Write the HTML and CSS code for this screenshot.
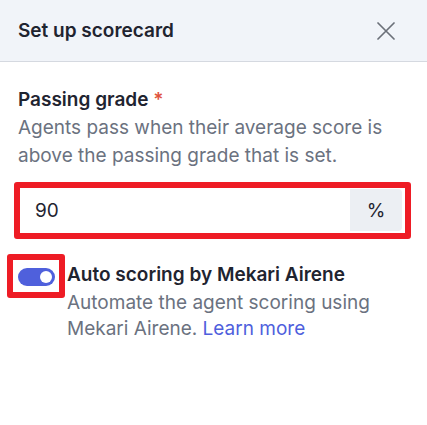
FILE: index.html
```html
<!DOCTYPE html>
<html>
<head>
<meta charset="utf-8">
<link rel="stylesheet" href="styles.css">
</head>
<body>
<div class="panel">
  <header class="header">
    <h1 class="title">Set up scorecard</h1>
    <button class="close" aria-label="Close">
      <svg width="18" height="18" viewBox="0 0 18 18"><path d="M1 1 L17 17 M17 1 L1 17" stroke="#6b7079" stroke-width="1.7" fill="none" stroke-linecap="round"/></svg>
    </button>
  </header>
  <main class="body">
    <section class="field">
      <div class="label">Passing grade <span class="req">*</span></div>
      <p class="help">Agents pass when their average score is above the passing grade that is set.</p>
      <div class="mark mark-input">
        <div class="input">
          <span class="value">90</span>
          <span class="addon">%</span>
        </div>
      </div>
    </section>
    <section class="auto">
      <div class="mark mark-toggle">
        <span class="toggle"><span class="knob"></span></span>
      </div>
      <div class="auto-text">
        <div class="auto-title">Auto scoring by Mekari Airene</div>
        <p class="help help-auto">Automate the agent scoring using Mekari Airene. <a class="link" href="#">Learn more</a></p>
      </div>
    </section>
  </main>
</div>
</body>
</html>
```

FILE: styles.css
```css
* { box-sizing: border-box; }
body {
  margin: 0;
  background: #ffffff;
  font-family: Inter, "Noto Sans", sans-serif;
  color: #1f2430;
}
.header {
  height: 62px;
  background: #f1f4f9;
  border-bottom: 1px solid #d5d9e0;
  display: flex;
  align-items: center;
  justify-content: space-between;
  padding: 0 32px 0 18px;
}
.title {
  margin: 0;
  font-size: 19px;
  font-weight: 600;
  color: #1f2430;
}
.close {
  border: 0;
  background: none;
  padding: 0;
  width: 18px;
  height: 18px;
  display: flex;
}
.body {
  padding: 26px 16px 0 14px;
}
.field { padding-left: 4px; }
.label {
  font-size: 19px;
  font-weight: 600;
  line-height: 24px;
}
.req { color: #e0533d; }
.help {
  margin: 2px 0 0;
  font-size: 19px;
  line-height: 28px;
  color: #6b7280;
}
.help-auto {
  margin-top: 3px;
  line-height: 26px;
}
.mark {
  border: 6px solid #ee1c25;
  border-radius: 3px;
}
.mark-input {
  margin: 12px 0 0 -4px;
  width: 397px;
}
.input {
  height: 45px;
  display: flex;
  align-items: center;
  justify-content: space-between;
  background: #fff;
}
.value {
  padding-left: 15px;
  font-size: 19px;
}
.addon {
  align-self: stretch;
  margin: 1px 3px 2px 0;
  width: 52px;
  background: #eceff3;
  border-radius: 0 4px 4px 0;
  display: flex;
  align-items: center;
  justify-content: center;
  font-size: 19px;
}
.auto {
  display: flex;
  align-items: flex-start;
  margin-top: 15px;
  margin-left: -7px;
}
.mark-toggle {
  width: 58px;
  height: 44px;
  display: flex;
  align-items: center;
  justify-content: center;
  flex-shrink: 0;
  margin-right: 2px;
}
.toggle {
  width: 37px;
  height: 18px;
  border-radius: 9px;
  background: #4f60dc;
  position: relative;
  margin-top: 2px;
}
.knob {
  position: absolute;
  right: 3px;
  top: 3px;
  width: 12px;
  height: 12px;
  border-radius: 50%;
  background: #fff;
}
.auto-text { padding-top: 9px; }
.auto-title {
  font-size: 19px;
  font-weight: 600;
  line-height: 24px;
}
.link {
  color: #4f5fdd;
  text-decoration: none;
}
```
